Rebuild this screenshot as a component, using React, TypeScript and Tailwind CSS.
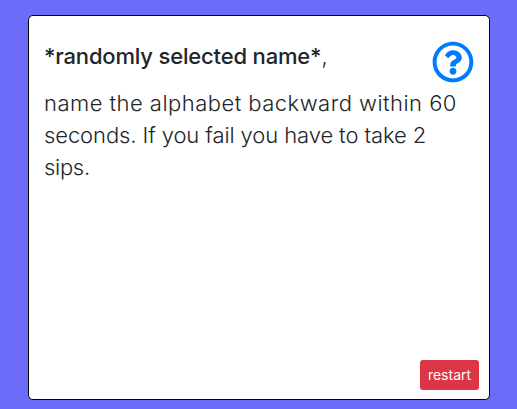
export default function App() {
  return (
    <main className="h-[409px] w-[517px] overflow-hidden bg-[#6c6cf8] pl-7 pt-[15px] font-['Inter','Open_Sans',sans-serif] text-[#212529]">
      <section className="flex h-[385px] w-[462px] flex-col justify-between rounded-[5px] border border-black bg-white pl-[15px] pr-[10px] pb-[9px]">
        <div className="flex items-start justify-between">
          <h1 className="mt-[24px] whitespace-nowrap text-[22px] font-medium leading-8 tracking-[-0.17px]">
            *randomly selected name*<span className="font-light">,</span>
          </h1>
          <button aria-label="Help" className="mr-[5px] mt-[24.5px] h-[42px] w-[42px] shrink-0 text-[#007bff]">
            <svg viewBox="0 0 512 512" fill="currentColor" className="block h-[42px] w-[42px]">
              <path d="M256 8C119.043 8 8 119.083 8 256c0 136.997 111.043 248 248 248s248-111.003 248-248C504 119.083 392.957 8 256 8zm0 448c-110.532 0-200-89.431-200-200 0-110.495 89.472-200 200-200 110.491 0 200 89.471 200 200 0 110.53-89.431 200-200 200zm107.244-255.2c0 67.052-72.421 68.084-72.421 92.863V300c0 6.627-5.373 12-12 12h-45.647c-6.627 0-12-5.373-12-12v-8.659c0-35.745 27.1-50.034 47.579-61.516 17.561-9.845 28.324-16.541 28.324-29.579 0-17.246-21.999-28.693-39.784-28.693-23.189 0-33.894 10.977-48.942 29.969-4.057 5.12-11.46 6.071-16.666 2.124l-27.824-21.098c-5.107-3.872-6.251-11.066-2.644-16.363C184.846 131.491 214.94 112 261.794 112c49.071 0 101.45 38.304 101.45 88.8zM298 368c0 23.159-18.841 42-42 42s-42-18.841-42-42 18.841-42 42-42 42 18.841 42 42z" />
            </svg>
          </button>
        </div>
        <p className="mb-auto mt-[4.5px] whitespace-nowrap text-[22px] font-light leading-8">
          <span className="block tracking-[0.47px]">name the alphabet backward within 60</span>
          <span className="block tracking-[-0.1px]">seconds. If you fail you have to take 2</span>
          <span className="block tracking-[-0.3px]">sips.</span>
        </p>
        <button className="flex h-[30px] w-[59px] items-center justify-center self-end rounded-[3px] bg-[#dc3545] pb-[2px] text-[14px] text-white">
          restart
        </button>
      </section>
    </main>
  );
}
